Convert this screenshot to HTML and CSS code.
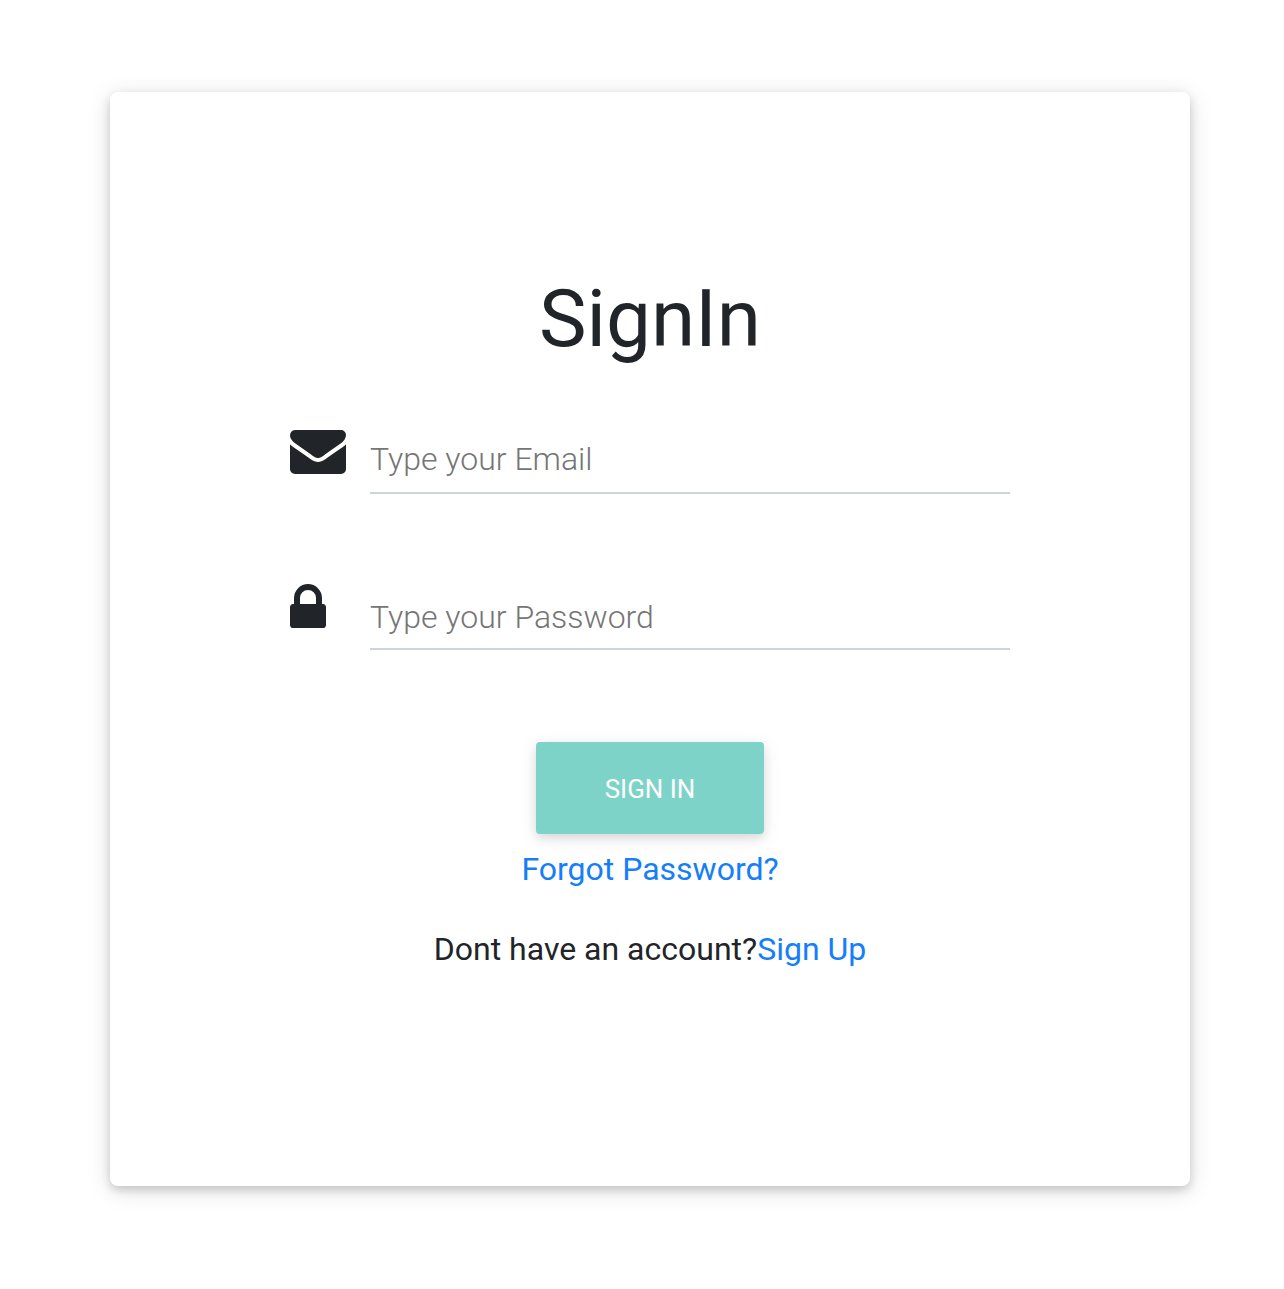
FILE: index.html
```html
<!DOCTYPE html>
<html lang="en">
<head>
<meta charset="utf-8">
<title>Sign In</title>
<link rel="stylesheet" href="styles.css">
</head>
<body>
<main class="card">
  <h1 class="title">SignIn</h1>
  <form class="form">
    <div class="field field-email">
      <svg class="icon icon-mail" viewBox="0 256 1792 1408" aria-hidden="true"><path d="M1792 710v794q0 66-47 113t-113 47h-1472q-66 0-113-47t-47-113v-794q44 49 101 87 362 246 497 345 57 42 92.500 65.500t94.500 48 110 24.500h2q51 0 110-24.500t94.500-48 92.500-65.500q170-123 498-345 57-39 100-87zM1792 416q0 79-49 151t-122 123q-376 261-468 325-10 7-42.500 31t-54 38.500-52 32.500-57.500 27-50 9h-2q-23 0-50-9t-57.500-27-52-32.500-54-38.500-42.500-31q-91-64-262-182.500t-205-142.500q-62-42-117-115.500t-55-136.500q0-78 41.500-130t118.500-52h1472q65 0 112.500 47t47.500 113z"/></svg>
      <input class="input" type="email" placeholder="Type your Email">
    </div>
    <div class="field field-password">
      <svg class="icon icon-lock" viewBox="0 128 1152 1408" aria-hidden="true"><path d="M320 768h512v-192q0-106-75-181t-181-75-181 75-75 181v192zM1152 864v576q0 40-28 68t-68 28h-960q-40 0-68-28t-28-68v-576q0-40 28-68t68-28h32v-192q0-184 132-316t316-132 316 132 132 316v192h32q40 0 68 28t28 68z"/></svg>
      <input class="input" type="password" placeholder="Type your Password">
    </div>
    <button class="submit" type="button">SIGN IN</button>
  </form>
  <a class="link forgot" href="#">Forgot Password?</a>
  <p class="signup">Dont have an account?<a class="link" href="#">Sign Up</a></p>
</main>
</body>
</html>
```
FILE: styles.css
```css
* { box-sizing: border-box; }
body {
  margin: 0;
  min-height: 1289px;
  padding: 92px 94px 0 110px;
  background: #fff;
  color: #212529;
  font: 400 32px/48px Roboto, sans-serif;
}
.card {
  display: flex;
  flex-direction: column;
  align-items: center;
  height: 1094px;
  padding-top: 179px;
  border-radius: 8px;
  background: #fff;
  box-shadow: 0 4px 10px rgba(0, 0, 0, .16), 0 4px 24px rgba(0, 0, 0, .13);
}
.title { margin: 0; font-size: 80px; line-height: 96px; font-weight: 400; }
.form { display: flex; flex-direction: column; align-items: center; width: 720px; }
.field { display: flex; align-items: flex-start; width: 720px; }
.field-email { height: 76px; margin-top: 51px; }
.field-password { height: 76px; margin-top: 80px; }
.icon { flex: none; fill: #212529; }
.icon-mail { width: 56px; height: 44px; margin: 12px 24px 0 0; }
.icon-lock { width: 36px; height: 44px; margin: 10px 44px 0 0; }
.input {
  width: 640px;
  height: 76px;
  padding: 7px 0 0;
  border: 0;
  border-bottom: 2px solid #ced4da;
  border-radius: 0;
  outline: 0;
  background: transparent;
  font: 300 32px/48px Roboto, sans-serif;
}
.field-password .input { padding-top: 11px; }
.input::placeholder { color: #757575; opacity: 1; }
.submit {
  width: 228px;
  height: 92px;
  margin-top: 92px;
  padding: 2px 0 0;
  border: 0;
  border-radius: 4px;
  background: #7dd3c8;
  color: #fff;
  font: 400 25.92px/36px Roboto, sans-serif;
  box-shadow: 0 4px 10px rgba(0, 0, 0, .1), 0 4px 20px rgba(0, 0, 0, .08);
}
.link { color: #147efb; text-decoration: none; }
.forgot { margin-top: 11px; }
.signup { margin: 32px 0 0; }
```
